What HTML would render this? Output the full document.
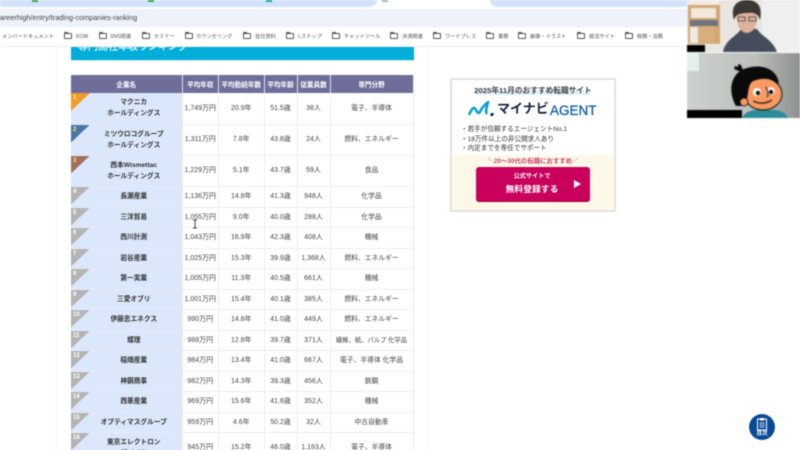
<!DOCTYPE html>
<html lang="ja"><head><meta charset="utf-8">
<style>
html,body{margin:0;padding:0;width:800px;height:450px;overflow:hidden;background:#fff}
body{position:relative;font-family:"Liberation Sans","Noto Sans CJK JP",sans-serif;color:#333}
.a{position:absolute}
.blur{filter:blur(.45px)}
#tbl{position:absolute;left:71px;top:75px;width:342px;border-collapse:collapse;table-layout:fixed;font-size:7px;color:#444;text-align:center}
#tbl th{background:#6f6e9b;color:#fff;font-size:6.6px;height:18px;padding:0;border-right:1px solid #dfe0ea;font-weight:bold;white-space:nowrap;box-sizing:border-box}
#tbl td{padding:0;border-right:1px solid #ececf0;border-bottom:1px solid #ececf0;line-height:11px;overflow:hidden;white-space:nowrap;box-sizing:border-box}
#tbl tr:nth-child(odd) td{height:21px}
#tbl tr:nth-child(even) td{height:20px}
#tbl td:first-child{background:#dbe7fa;color:#333;font-weight:bold;font-size:6.7px;border-bottom-color:#e4ecfa;position:relative;padding-left:15px}
#tbl td:last-child{font-size:6.8px}
#tbl tr.t td{height:31px}
.r{position:absolute;left:0;top:0;width:19px;height:18px}
.r b{position:absolute;left:2px;top:0;color:#fff;font-size:6px;font-weight:bold;line-height:11px}
.r i{position:absolute;left:0;top:0;width:19px;height:18px;background:#b4b4b4;clip-path:polygon(0 0,100% 0,0 100%)}
.y b{color:#ffe9a0}
.bm{position:absolute;top:32px;font-size:5.2px;color:#555;white-space:nowrap;line-height:10px}
.f{position:absolute;top:33px;width:8px;height:6px;border:1px solid #555;border-radius:1px;box-sizing:border-box}
.f:before{content:"";position:absolute;left:-1px;top:-2px;width:4px;height:1px;background:#555}
</style></head><body>
<div class="blur">
<!-- browser chrome -->
<div class="a" style="left:0;top:0;width:800px;height:7px;background:#fff"></div>
<div class="a" style="left:0;top:0;width:377px;height:7px;background:#d3e2fb;border-radius:0 0 8px 0"></div>
<div class="a" style="left:32px;top:0;width:6px;height:2px;background:#34a853"></div>
<div class="a" style="left:148px;top:0;width:6px;height:2px;background:#34a853"></div>
<div class="a" style="left:266px;top:0;width:6px;height:2px;background:#1aa39a"></div>
<div class="a" style="left:382px;top:0;width:6px;height:2px;background:#8fc4c0"></div>
<div class="a" style="left:490px;top:0;width:200px;height:7px;background:#d3e2fb;border-radius:0 0 0 8px"></div>
<div class="a" style="left:0;top:9px;width:690px;height:18px;background:#eef2fb"></div>
<div class="a" style="left:0;top:12px;font-size:7.3px;line-height:12px;color:#444;white-space:nowrap;margin-left:-4px">careerhigh/entry/trading-companies-ranking</div>
<div class="a" style="left:0;top:46px;width:800px;height:1px;background:#eee"></div>
<div class="bm" style="left:2px">メンバードキュメント</div>
<div class="f" style="left:64px"></div><div class="bm" style="left:76px">KOIB</div>
<div class="f" style="left:99px"></div><div class="bm" style="left:110px">SNS関連</div>
<div class="f" style="left:142px"></div><div class="bm" style="left:154px">セミナー</div>
<div class="f" style="left:185px"></div><div class="bm" style="left:196px">カウンセリング</div>
<div class="f" style="left:243px"></div><div class="bm" style="left:255px">会社資料</div>
<div class="f" style="left:286px"></div><div class="bm" style="left:298px">Lステップ</div>
<div class="f" style="left:332px"></div><div class="bm" style="left:344px">チャットツール</div>
<div class="f" style="left:390px"></div><div class="bm" style="left:402px">決済関連</div>
<div class="f" style="left:433px"></div><div class="bm" style="left:445px">ワードプレス</div>
<div class="f" style="left:486px"></div><div class="bm" style="left:498px">業務</div>
<div class="f" style="left:518px"></div><div class="bm" style="left:530px">画像・イラスト</div>
<div class="f" style="left:577px"></div><div class="bm" style="left:589px">就活サイト</div>
<div class="f" style="left:625px"></div><div class="bm" style="left:637px">税務・法務</div>
<!-- page columns -->
<div class="a" style="left:56px;top:47px;width:1px;height:403px;background:#f4f4f4"></div>
<div class="a" style="left:428px;top:47px;width:1px;height:403px;background:#f4f4f4"></div>
<!-- banner -->
<div class="a" style="left:71px;top:47px;width:343px;height:13px;background:#00aed9;overflow:hidden;box-shadow:0 1px 0 #cfe9f2">
<div style="position:absolute;left:7px;top:-6px;font-size:10px;line-height:14px;color:#cdeef7;font-weight:bold;white-space:nowrap">専門商社年収ランキング</div></div>
<!-- table -->
<table id="tbl"><colgroup><col style="width:111px"><col style="width:36.5px"><col style="width:45.5px"><col style="width:33px"><col style="width:33px"><col style="width:83px"></colgroup>
<tr><th>企業名</th><th>平均年収</th><th>平均勤続年数</th><th>平均年齢</th><th>従業員数</th><th>専門分野</th></tr>
<tr class="t"><td><div class="r y"><i style="background:#f39a2d"></i><b>1</b></div>マクニカ<br>ホールディングス</td><td>1,749万円</td><td>20.9年</td><td>51.5歳</td><td>38人</td><td>電子、半導体</td></tr>
<tr class="t"><td><div class="r y"><i style="background:#4a76a3"></i><b>2</b></div>ミツウロコグループ<br>ホールディングス</td><td>1,311万円</td><td>7.8年</td><td>43.8歳</td><td>24人</td><td>燃料、エネルギー</td></tr>
<tr class="t"><td><div class="r y"><i style="background:#a0705c"></i><b>3</b></div>西本Wismettac<br>ホールディングス</td><td>1,229万円</td><td>5.1年</td><td>43.7歳</td><td>59人</td><td>食品</td></tr>
<tr><td><div class="r"><i></i><b>4</b></div>長瀬産業</td><td>1,136万円</td><td>14.8年</td><td>41.3歳</td><td>948人</td><td>化学品</td></tr>
<tr><td><div class="r"><i></i><b>5</b></div>三洋貿易</td><td>1,055万円</td><td>9.0年</td><td>40.0歳</td><td>288人</td><td>化学品</td></tr>
<tr><td><div class="r"><i></i><b>6</b></div>西川計測</td><td>1,043万円</td><td>16.9年</td><td>42.3歳</td><td>408人</td><td>機械</td></tr>
<tr><td><div class="r"><i></i><b>7</b></div>岩谷産業</td><td>1,025万円</td><td>15.3年</td><td>39.9歳</td><td>1,368人</td><td>燃料、エネルギー</td></tr>
<tr><td><div class="r"><i></i><b>8</b></div>第一実業</td><td>1,005万円</td><td>11.3年</td><td>40.5歳</td><td>661人</td><td>機械</td></tr>
<tr><td><div class="r"><i></i><b>9</b></div>三愛オブリ</td><td>1,001万円</td><td>15.4年</td><td>40.1歳</td><td>385人</td><td>燃料、エネルギー</td></tr>
<tr><td><div class="r"><i></i><b>10</b></div>伊藤忠エネクス</td><td>990万円</td><td>14.8年</td><td>41.0歳</td><td>449人</td><td>燃料、エネルギー</td></tr>
<tr><td><div class="r"><i></i><b>11</b></div>蝶理</td><td>988万円</td><td>12.8年</td><td>39.7歳</td><td>371人</td><td style="font-size:6.3px">繊維、紙、パルプ 化学品</td></tr>
<tr><td><div class="r"><i></i><b>12</b></div>稲畑産業</td><td>984万円</td><td>13.4年</td><td>41.0歳</td><td>667人</td><td>電子、半導体 化学品</td></tr>
<tr><td><div class="r"><i></i><b>13</b></div>神鋼商事</td><td>982万円</td><td>14.3年</td><td>39.3歳</td><td>456人</td><td>鉄鋼</td></tr>
<tr><td><div class="r"><i></i><b>14</b></div>西華産業</td><td>969万円</td><td>15.6年</td><td>41.8歳</td><td>352人</td><td>機械</td></tr>
<tr><td><div class="r"><i></i><b>15</b></div>オプティマスグループ</td><td>959万円</td><td>4.6年</td><td>50.2歳</td><td>32人</td><td>中古自動車</td></tr>
<tr class="t"><td><div class="r"><i></i><b>16</b></div>東京エレクトロン<br>デバイス</td><td>945万円</td><td>15.2年</td><td>46.0歳</td><td>1,163人</td><td>電子、半導体</td></tr>
</table>
<div class="a" style="left:413px;top:75px;width:1px;height:375px;background:#e6e6ee"></div>
<!-- cursor -->
<svg class="a" style="left:192px;top:219px" width="6" height="10" viewBox="0 0 6 10"><path d="M1 1h4M3 1v8M1 9h4" stroke="#444" fill="none"/></svg>
<!-- ad -->
<div class="a" style="left:450px;top:78px;width:166px;height:134px;box-sizing:border-box;border:2px solid #e2e2e2;background:#fff;overflow:hidden">
<div class="a" style="left:0;top:75px;width:162px;height:55px;background:#fdf9e8"></div>
<div class="a" style="left:23px;top:10px;width:115px;height:5px;background:#dff1fa"></div>
<div class="a" style="left:0;width:162px;top:4px;text-align:center;font-size:7.7px;font-weight:bold;color:#444;line-height:14px;white-space:nowrap">2025年11月のおすすめ転職サイト</div>
<svg class="a" style="left:16px;top:21px" width="28" height="17" viewBox="0 0 28 17"><path d="M1 14C4 7 6 5 8 9s3 4 5 0 5-6 7-8c-1 4-3 10-1 12" stroke="#0e9fd8" stroke-width="2.6" fill="none"/><path d="M23 12h3l-1 3h-3z" fill="#15233f"/></svg>
<div class="a" style="left:45px;top:19px;font-size:13px;line-height:20px;font-weight:bold;color:#15233f;white-space:nowrap">マイナビ</div>
<div class="a" style="left:98px;top:23px;font-size:13.5px;line-height:15px;color:#1565a8;white-space:nowrap;-webkit-text-stroke:.35px #1565a8">AGENT</div>
<div class="a" style="left:9px;top:45px;font-size:6.6px;line-height:9.5px;color:#333;white-space:nowrap">・若手が信頼するエージェントNo.1<br>・18万件以上の非公開求人あり<br>・内定までを専任でサポート</div>
<div class="a" style="left:0;width:162px;top:77px;text-align:center;font-size:6.4px;font-weight:bold;line-height:10px;color:#c8456f;white-space:nowrap">＼20～30代の転職におすすめ／</div>
<div class="a" style="left:24px;top:87px;width:114px;height:34px;background:#c9005c;border-radius:3px;box-shadow:0 1px 0 #99003f">
<div class="a" style="left:0;width:112px;top:5px;text-align:center;color:#fff;font-size:6.2px;font-weight:bold;line-height:10px">公式サイトで</div>
<div class="a" style="left:0;width:112px;top:15px;text-align:center;color:#fff;font-size:8.8px;font-weight:bold;line-height:14px">無料登録する</div>
<div class="a" style="left:98px;top:13px;width:0;height:0;border-left:7px solid #fff;border-top:4.5px solid transparent;border-bottom:4.5px solid transparent"></div>
</div></div>
<!-- toc button -->
<div class="a" style="left:749px;top:414px;width:26px;height:26px;border-radius:50%;background:#0b4a96"></div>
<svg class="a" style="left:756px;top:417px" width="12" height="14" viewBox="0 0 12 14"><rect x="1.5" y="2" width="9" height="11" fill="none" stroke="#fff"/><rect x="4" y="1" width="4" height="2.5" fill="#fff"/><path d="M3.5 6h5M3.5 8h5M3.5 10h5" stroke="#fff" stroke-width=".7"/></svg>
<div class="a" style="left:749px;width:26px;top:431px;text-align:center;color:#fff;font-size:5.5px;line-height:7px;font-weight:bold">目次</div>
</div>
<!-- video tiles -->
<svg class="a" style="left:687px;top:0;filter:blur(.7px)" width="113" height="118" viewBox="0 0 113 118">
<defs><linearGradient id="g" x1="0" y1="0" x2="1" y2="0"><stop offset="0" stop-color="#cdd2ce"/><stop offset=".6" stop-color="#bcbfba"/><stop offset="1" stop-color="#8d918f"/></linearGradient></defs>
<rect width="113" height="52" fill="#e9e6e1"/>
<rect x="0" y="0" width="32" height="46" fill="#f1ede7"/>
<path d="M1 5H33V44H1z" fill="#d3a773"/><rect x="4" y="8" width="25" height="10" fill="#f1e9dc"/><rect x="3" y="20" width="28" height="6" fill="#6d7480"/><rect x="11" y="26" width="16" height="17" fill="#d7ae7c"/><rect x="3" y="27" width="8" height="16" fill="#efeae2"/>
<rect x="75" y="0" width="38" height="52" fill="#eef0ef"/>
<path d="M36 52C38 40 50 36 54 29H70C74 36 86 40 90 52Z" fill="#454c5c"/>
<ellipse cx="60" cy="19" rx="10" ry="14" fill="#dcb39f"/>
<path d="M47 20C43 6 50 0 60 0 70 0 76 6 73 20 71 14 68 12 60 13 54 13 49 14 47 20Z" fill="#3b3735"/>
<path d="M51 17h7v4h-7zM62 17h7v4h-7z" fill="none" stroke="#3a3a3a" stroke-width=".8"/>
<rect y="45" width="18" height="7" fill="#000"/>
<rect y="53" width="113" height="65" fill="url(#g)"/>
<rect x="0" y="53" width="12" height="18" fill="#e4efee"/>
<rect y="110" width="55" height="8" fill="#000"/>
<path d="M55 118c2-5 8-8 14-8h18c6 0 12 3 14 8z" fill="#2b8b99"/>
<ellipse cx="76" cy="94" rx="19" ry="16" fill="#f89a62" stroke="#111" stroke-width="1"/>
<path d="M49 106C40 90 44 72 60 68 74 64 90 68 92 84 84 77 74 78 66 81 60 85 62 96 58 106Z" fill="#0a0a0a"/>
<path d="M54 72l-7-3 1-3 3 1 0-3 3 1 2 5z" fill="#0a0a0a"/>
<circle cx="57" cy="102" r="4" fill="#f89a62" stroke="#111" stroke-width=".8"/>
<circle cx="70" cy="92" r="4" fill="#fff"/><circle cx="71" cy="93" r="2.2" fill="#111"/>
<circle cx="84" cy="91" r="3.8" fill="#fff"/><circle cx="84" cy="92" r="2.2" fill="#111"/>
<path d="M66 101c6 3 13 3 19-1" stroke="#111" fill="none" stroke-width="1.2"/>
<path d="M79 87c2 5 3 8 1 10" stroke="#111" fill="none"/>
</svg>
</body></html>
